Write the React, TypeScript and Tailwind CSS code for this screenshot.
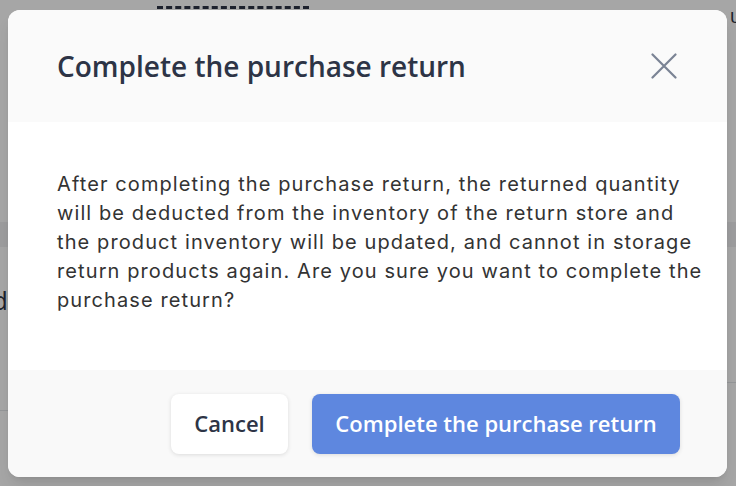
const title = "Complete the purchase return";

function BackgroundPage() {
  // the page behind the dialog, mostly hidden
  return (
    <div className="w-[736px] h-[486px] bg-white flex flex-col font-['Open_Sans',sans-serif] text-[#2d3446]">
      <div className="h-[30px] flex items-start">
        <div className="ml-[157px] mt-[6px] w-[152px] border-b-[3px] border-dashed border-[#2d3446]" />
        <div className="ml-auto -mr-[6px] mt-[6px] text-[20px] leading-[20px]">u</div>
      </div>
      <div className="h-[192px]" />
      <div className="h-[25px] bg-[#f1f1f3]" />
      <div className="flex">
        <div className="w-[40px] flex flex-col">
          <div className="mt-[38px] -ml-[8px] text-[26px] leading-[30px]">d</div>
          <div className="h-[96px] border-b border-[#e4e6ea]" />
          <div className="pt-[26px] -ml-[12px] text-[20px] leading-[24px]">o</div>
        </div>
        <div className="ml-auto w-[20px] h-[136px] border-b border-[#e4e6ea]" />
      </div>
    </div>
  );
}

export default function App() {
  return (
    <div className="relative w-[736px] h-[486px] overflow-hidden">
      <BackgroundPage />
      <div className="absolute inset-0 bg-black/35" />

      {/* Dialog */}
      <div className="absolute left-[8px] top-[10px] w-[719px] h-[467px] rounded-xl overflow-hidden flex flex-col bg-white shadow-lg">
        <div className="h-[112px] shrink-0 bg-[#fafafa] flex items-center justify-between pl-[49px] pr-[50px]">
          <h2 className="text-[28px] font-semibold text-[#2d3446] font-['Open_Sans',sans-serif]">{title}</h2>
          <button className="text-[#7a8394]">
            <svg width="26" height="26" viewBox="0 0 26 26" fill="none" stroke="currentColor" strokeWidth="2.2" strokeLinecap="round">
              <path d="M1.5 1.5 24.5 24.5M24.5 1.5 1.5 24.5" />
            </svg>
          </button>
        </div>

        <div className="flex-1 bg-white pl-[49px] pr-[20px] pt-[48px]">
          <p className="text-[20px] leading-[29px] tracking-[1.1px] text-[#333333] font-['Inter',sans-serif]">
            After completing the purchase return, the returned quantity will be deducted from the inventory of the
            return store and the product inventory will be updated, and cannot in storage return products again. Are
            you sure you want to complete the purchase return?
          </p>
        </div>

        <div className="h-[107px] shrink-0 bg-[#f9f9f9] flex items-center justify-end gap-[24px] pr-[47px]">
          <button className="h-[60px] w-[117px] rounded-lg bg-white shadow-[0_1px_4px_rgba(0,0,0,0.12)] text-[22px] font-semibold text-[#2d3446] font-['Open_Sans',sans-serif]">
            Cancel
          </button>
          <button className="h-[60px] w-[368px] rounded-lg bg-[#5e87df] shadow-[0_1px_4px_rgba(0,0,0,0.12)] text-[22px] font-semibold text-white font-['Open_Sans',sans-serif]">
            {title}
          </button>
        </div>
      </div>
    </div>
  );
}
